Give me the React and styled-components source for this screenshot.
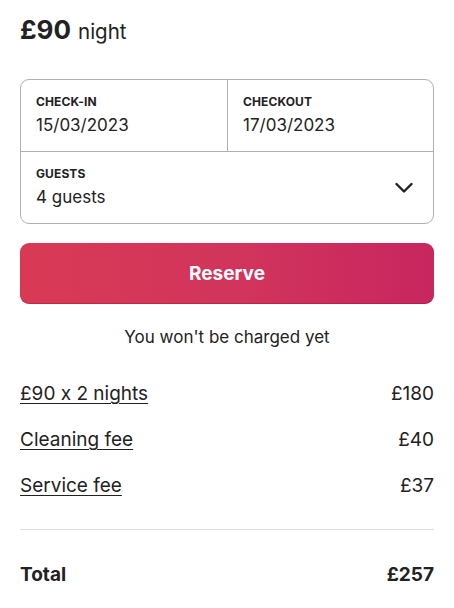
import React from "react";
import styled, { createGlobalStyle } from "styled-components";

const Global = createGlobalStyle`
  html, body { margin: 0; padding: 0; background: #fff; }
  body {
    font-family: Inter, "Noto Sans", sans-serif;
    color: #222;
    font-feature-settings: "calt" 0;
  }
  * { box-sizing: border-box; }
`;

const Card = styled.div`
  width: 454px;
  padding: 14px 20px 0;
  display: flex;
  flex-direction: column;
`;

const PriceLine = styled.div`
  display: flex;
  align-items: baseline;
  gap: 7px;
  line-height: 32px;
`;

const Price = styled.span`
  font-size: 26px;
  font-weight: 700;
  color: #222;
`;

const Unit = styled.span`
  font-size: 20.5px;
  font-weight: 400;
  color: #222;
`;

const Picker = styled.div`
  margin-top: 31px;
  border: 1px solid #b0b0b0;
  border-radius: 9px;
  display: flex;
  flex-direction: column;
`;

const DateRow = styled.div`
  display: grid;
  grid-template-columns: 1fr 1fr;
  border-bottom: 1px solid #b0b0b0;
`;

const Cell = styled.div`
  padding: 14px 15px 15px;
  display: flex;
  flex-direction: column;
  gap: 4px;
  border-left: ${(p) => (p.$divided ? "1px solid #b0b0b0" : "none")};
`;

const GuestRow = styled.div`
  display: flex;
  align-items: center;
  justify-content: space-between;
  padding-right: 20px;
`;

const Label = styled.span`
  font-size: 12px;
  line-height: 16px;
  font-weight: 700;
  color: #222;
  letter-spacing: 0.1px;
`;

const Value = styled.span`
  font-size: 17px;
  line-height: 22px;
  color: #222;
`;

const ReserveButton = styled.button`
  margin-top: 19px;
  height: 61px;
  border: none;
  border-radius: 9px;
  background: linear-gradient(to right, #d83a55 0%, #d2355c 50%, #c7265f 100%);
  box-shadow: inset 0 -1px 0 rgba(160, 0, 40, 0.35);
  color: #fff;
  font-family: inherit;
  font-size: 19px;
  font-weight: 700;
  cursor: pointer;
`;

const Note = styled.p`
  margin: 21px 0 0;
  text-align: center;
  font-size: 17px;
  line-height: 24px;
  color: #222;
`;

const Lines = styled.div`
  margin-top: 33px;
  display: flex;
  flex-direction: column;
  gap: 22px;
`;

const Line = styled.div`
  display: flex;
  justify-content: space-between;
  align-items: center;
  font-size: 19px;
  line-height: 24px;
  color: #222;
`;

const Link = styled.span`
  text-decoration: underline;
  text-underline-offset: 3px;
  text-decoration-thickness: 1px;
`;

const Divider = styled.hr`
  margin: 31px 0 0;
  border: none;
  border-top: 1px solid #dddddd;
`;

const TotalLine = styled(Line)`
  margin-top: 33px;
  font-weight: 700;
`;

const Chevron = () => (
  <svg width="18" height="12" viewBox="0 0 18 12" fill="none">
    <path d="M1.5 2 L9 9.5 L16.5 2" stroke="#222" strokeWidth="2.4" strokeLinecap="round" strokeLinejoin="round" />
  </svg>
);

export default function App() {
  const items = [
    ["£90 x 2 nights", "£180"],
    ["Cleaning fee", "£40"],
    ["Service fee", "£37"],
  ];
  return (
    <>
      <Global />
      <Card>
        <PriceLine>
          <Price>£90</Price>
          <Unit>night</Unit>
        </PriceLine>
        <Picker>
          <DateRow>
            <Cell>
              <Label>CHECK-IN</Label>
              <Value>15/03/2023</Value>
            </Cell>
            <Cell $divided>
              <Label>CHECKOUT</Label>
              <Value>17/03/2023</Value>
            </Cell>
          </DateRow>
          <GuestRow>
            <Cell>
              <Label>GUESTS</Label>
              <Value>4 guests</Value>
            </Cell>
            <Chevron />
          </GuestRow>
        </Picker>
        <ReserveButton>Reserve</ReserveButton>
        <Note>You won't be charged yet</Note>
        <Lines>
          {items.map(([l, v]) => (
            <Line key={l}>
              <Link>{l}</Link>
              <span>{v}</span>
            </Line>
          ))}
        </Lines>
        <Divider />
        <TotalLine>
          <span>Total</span>
          <span>£257</span>
        </TotalLine>
      </Card>
    </>
  );
}
